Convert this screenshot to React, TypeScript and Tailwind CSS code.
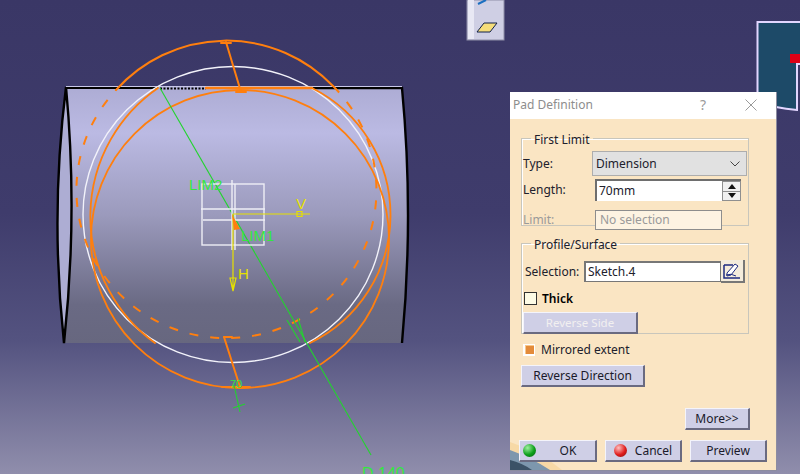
import type { ReactNode } from "react";

const ORANGE = "#ff7f0e";
const GREEN = "#22d42e";
const LABEL = "#33e83f";
const YELLOW = "#e6e000";

const Viewport = () => {
  return (
    <svg width="800" height="474" viewBox="0 0 800 474" className="absolute left-0 top-0">
      <defs>
        <linearGradient id="cyl" x1="0" y1="87" x2="0" y2="343" gradientUnits="userSpaceOnUse">
          <stop offset="0" stopColor="#adacd4" />
          <stop offset="0.18" stopColor="#bbbae3" />
          <stop offset="0.5" stopColor="#9b9abc" />
          <stop offset="0.85" stopColor="#6a6a84" />
          <stop offset="1" stopColor="#67677f" />
        </linearGradient>
      </defs>

      {/* cylinder */}
      <path d="M66 87 H402 Q414 215 402 343 H64 Z" fill="url(#cyl)" />
      <path d="M66 87 Q50 215 64 343 Q78 215 66 87 Z" fill="#adadd3" stroke="#000" strokeWidth="2.400" />
      <path d="M66 88 H158" stroke="#000" strokeWidth="2" />
      <path d="M160 88.500 H206" stroke="#000" strokeWidth="2" strokeDasharray="2 1.500" />
      <path d="M312 88 H402 Q414 215 402 343" stroke="#000" strokeWidth="2.400" fill="none" />
      <path d="M66 86.500 H402" stroke="#c9c8e8" strokeWidth="1" />

      {/* white sketch circle */}
      <ellipse cx="233" cy="214.500" rx="150" ry="148" fill="none" stroke="#f2f2fa" strokeWidth="1.400" />

      {/* orange limits */}
      <g fill="none" stroke={ORANGE} strokeLinecap="round">
        <path d="M206 88 H312" strokeWidth="2.400" />
        <path d="M116 90 A148 148 0 0 1 333 86" strokeWidth="2" />
        <path d="M333 86 A150 148 0 1 1 116 90" strokeWidth="2" strokeDasharray="9 12" strokeLinecap="butt" />
        <circle cx="240" cy="239" r="149" strokeWidth="1.800" />
        <path d="M158 88 A156 156 0 0 0 155 343" strokeWidth="1.800" />
        <path d="M312 88 A142 142 0 0 1 310 343" strokeWidth="1.800" />
        <path d="M226 42 L241 92" strokeWidth="2" />
        <path d="M224 337 L240 387" strokeWidth="2" />
        <path d="M224 337 H232 M221 43 H231 M236 92 H246 M222 387 H250" strokeWidth="2" />
      </g>

      {/* green construction lines */}
      <g fill="none" stroke={GREEN} strokeWidth="1.100">
        <path d="M160 88 L371 455" />
        <path d="M234 385 L240 412 M233 408 L245 404" />
        <path d="M287 320 L300 342 M298 318 L305 342" />
      </g>

      {/* sketch origin */}
      <g fill="none" stroke="#eeeef6" strokeWidth="1.400">
        <rect x="202" y="184" width="62" height="61" />
        <path d="M201 209 H265 M203 220 H265 M232 180 V250 M235 184 V250" />
      </g>
      <g fill="none" stroke={YELLOW} strokeWidth="1.200">
        <path d="M233 214 H310 M297 211.500 H302 V216.500 H297 Z" />
        <path d="M233 214 V291 M230 278 H236 L233 291 Z" />
      </g>
      <path d="M232 214 L240 229 L234 230 Z" fill={ORANGE} />

      <g fontFamily="'Liberation Sans', sans-serif" fontSize="15">
        <text x="189" y="190" fill={LABEL}>LIM2</text>
        <text x="241" y="241" fill={LABEL}>LIM1</text>
        <text x="296" y="209" fill={YELLOW}>V</text>
        <text x="238" y="279" fill={YELLOW}>H</text>
        <text x="230" y="388" fill={LABEL} fontSize="11">70</text>
        <text x="362" y="479" fill={LABEL} fontSize="16">D 140</text>
      </g>

      {/* piece of toolbar */}
      <rect x="467" y="0" width="37" height="40" fill="#cfcfe4" stroke="#8f8fa8" strokeWidth="1" />
      <rect x="468" y="0" width="6" height="39" fill="#e8e8f4" />
      <path d="M478 4 L486 0" stroke="#1b6fc0" strokeWidth="2" />
      <path d="M484 23 H497 L490 32 H477 Z" fill="#f5dd7a" stroke="#10204a" strokeWidth="1" />

      {/* other window behind the dialog */}
      <path d="M800 22 H757.500 V104 L776 107 Q786 109 797 110 V64 H800" fill="#1d4a68" stroke="#e2d6ff" strokeWidth="2" />
      <rect x="790" y="54" width="10" height="9" fill="#dd0016" />
    </svg>
  );
};

const Btn = ({ className, children, disabled }: { className: string; children: ReactNode; disabled?: boolean }) => {
  return (
    <div
      className={`flex h-[22px] items-center justify-center bg-[#cfcfe6] border-t border-l border-[#f4f4fb] border-b-2 border-r-2 border-b-[#6a6a80] border-r-[#6a6a80] ${disabled ? "text-[#f2f0f0]" : "text-[#1a1a2a]"} ${className}`}
    >
      {children}
    </div>
  );
};

const Dialog = () => {
  return (
    <div className="absolute left-[510px] top-[92px] flex h-[379px] w-[267px] flex-col border-r border-b border-[#8c8ca0] bg-[#fae5c3] font-['Noto_Sans',sans-serif] text-[12px] leading-none text-[#20202c]">
      {/* title bar */}
      <div className="flex h-[27px] shrink-0 items-center bg-white pb-[2px] pl-[3px] text-[#8d8d8d]">
        <span className="text-[12px]">Pad Definition</span>
        <span className="ml-[107px] text-[14px] text-[#9a9a9a]">?</span>
        <svg width="12" height="12" viewBox="0 0 12 12" className="ml-[39px]">
          <path d="M0.500 0.500 L11.500 11.500 M11.500 0.500 L0.500 11.500" stroke="#9a9a9a" strokeWidth="1" />
        </svg>
      </div>

      <div className="relative flex flex-1 flex-col pl-[11px] pt-[10px]">
        <fieldset className="h-[97px] w-[228px] border border-[#c8c6bc] shadow-[inset_1px_1px_0_#fff]">
          <legend className="ml-[9px] px-[3px] pt-[4px] text-[12px] leading-[14px]">First Limit</legend>
          <div className="mt-[4px] flex h-[25px] items-center pl-[1px]">
            <span className="w-[69px]">Type:</span>
            <div className="flex h-[25px] w-[155px] items-center justify-between border border-[#adadad] bg-[#e1e1e1] pl-[3px] pr-[6px]">
              Dimension
              <svg width="10" height="6" viewBox="0 0 10 6">
                <path d="M0.500 0.500 L5 5 L9.500 0.500" fill="none" stroke="#444" strokeWidth="1" />
              </svg>
            </div>
          </div>
          <div className="mt-[3px] flex h-[22px] items-center pl-[1px]">
            <span className="w-[72px]">Length:</span>
            <div className="flex h-[22px] w-[146px] items-center border-2 border-b-0 border-r-0 border-[#6e6e6e] bg-white pl-[2px]">
              <span className="flex-1">70mm</span>
              <div className="flex h-[20px] w-[19px] flex-col gap-[1px] bg-[#8f8f8f] p-[1px]">
                <div className="flex flex-1 items-center justify-center bg-[#f0f0f0]">
                  <div className="border-x-[4px] border-b-[5px] border-x-transparent border-b-[#111]" />
                </div>
                <div className="flex flex-1 items-center justify-center bg-[#f0f0f0]">
                  <div className="border-x-[4px] border-t-[5px] border-x-transparent border-t-[#111]" />
                </div>
              </div>
            </div>
          </div>
          <div className="mt-[9px] flex h-[20px] items-center pl-[1px] text-[#9a9a9a]">
            <span className="w-[72px]">Limit:</span>
            <div className="flex h-[20px] w-[127px] items-center border border-[#8d8d8d] bg-[#fdf3e2] pl-[4px] text-[#9a9a9a]">
              No selection
            </div>
          </div>
        </fieldset>

        <fieldset className="mt-[8px] h-[100px] w-[228px] border border-[#c8c6bc] shadow-[inset_1px_1px_0_#fff]">
          <legend className="ml-[9px] px-[3px] pt-[4px] text-[12px] leading-[14px]">Profile/Surface</legend>
          <div className="mt-[8px] flex h-[23px] items-center pl-[3px]">
            <span className="w-[59px]">Selection:</span>
            <div className="flex h-[21px] w-[137px] items-center border border-t-2 border-l-2 border-[#777] bg-white pl-[2px]">Sketch.4</div>
            <div className="flex h-[23px] w-[24px] items-center justify-center border-r-2 border-b-2 border-[#777] bg-[#f4ecdc]">
              <svg width="18" height="18" viewBox="0 0 18 18">
                <path d="M1 3 H10 M1 3 V16 H17" fill="none" stroke="#1d2a80" strokeWidth="1.500" />
                <path d="M4 11 L12 2 L15 4 L8 13 L4 14 Z" fill="#fff" stroke="#1d2a80" strokeWidth="1" />
                <path d="M3 13 Q8 11 13 14" fill="none" stroke="#1d2a80" strokeWidth="1" />
              </svg>
            </div>
          </div>
          <div className="mt-[9px] flex h-[13px] items-center pl-[2px]">
            <div className="h-[13px] w-[13px] border border-[#333] bg-[#fdfbe6]" />
            <span className="ml-[5px] font-semibold text-black">Thick</span>
          </div>
          <Btn disabled className="ml-[1px] mt-[7px] w-[115px] text-[11.500px]">Reverse Side</Btn>
        </fieldset>

        <div className="mt-[9px] flex h-[13px] items-center pl-[2px]">
          <div className="flex h-[12px] w-[12px] items-center justify-center bg-white">
            <div className="h-[9px] w-[9px] bg-[#e38b3a] shadow-[inset_1px_1px_0_#f8c88c]" />
          </div>
          <span className="ml-[6px]">Mirrored extent</span>
        </div>
        <Btn className="mt-[9px] w-[124px]">Reverse Direction</Btn>
        <Btn className="ml-[164px] mt-[21px] w-[65px]">More&gt;&gt;</Btn>

        <svg width="52" height="32" viewBox="0 0 52 32" className="absolute bottom-0 left-0">
          <path d="M0 4 Q30 14 52 32 H0 Z" fill="#f7d9a6" />
          <path d="M0 12 Q22 20 40 32 H0 Z" fill="#7d97ad" />
          <path d="M0 22 Q12 25 22 32 H0 Z" fill="#3b5266" />
        </svg>

        <div className="relative -ml-[2px] mt-[10px] flex gap-[8px]">
          <Btn className="w-[78px] gap-[24px] pr-[16px]">
            <span className="h-[13px] w-[13px] rounded-full bg-[radial-gradient(circle_at_35%_30%,#9ff0a0,#0da01a_55%,#075c10)]" />
            OK
          </Btn>
          <Btn className="w-[77px] gap-[8px]">
            <span className="h-[13px] w-[13px] rounded-full bg-[radial-gradient(circle_at_35%_30%,#ffc0c0,#e01c1c_55%,#7a0c0c)]" />
            Cancel
          </Btn>
          <Btn className="w-[77px]">Preview</Btn>
        </div>
      </div>
    </div>
  );
};

export default function App() {
  return (
    <div className="relative h-[474px] w-[800px] overflow-hidden bg-[linear-gradient(180deg,#3a3766_0%,#3f3c6c_45%,#545380_72%,#908eac_100%)]">
      <Viewport />
      <Dialog />
    </div>
  );
}
